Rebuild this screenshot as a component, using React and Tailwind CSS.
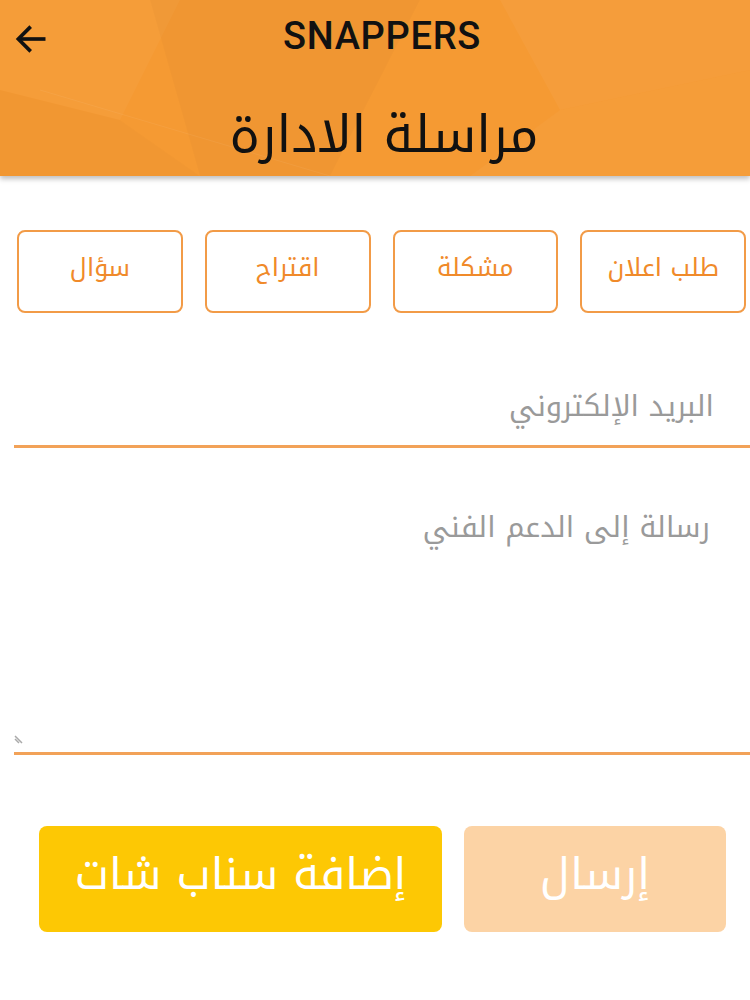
import React from "react";

const ar = { fontFamily: '"Noto Kufi Arabic", "Noto Sans Arabic", "DejaVu Sans", sans-serif' };

function Facets() {
  return (
    <svg className="absolute inset-0 w-full h-full" viewBox="0 0 750 176" preserveAspectRatio="none">
      <polygon points="0,0 180,0 120,120 0,90" fill="#ffffff" opacity="0.03" />
      <polygon points="150,0 420,0 330,176 200,176" fill="#000000" opacity="0.02" />
      <polygon points="500,0 750,0 750,70 560,110" fill="#ffffff" opacity="0.04" />
      <polygon points="560,110 750,70 750,176 470,176" fill="#ffffff" opacity="0.03" />
      <polygon points="0,90 120,120 200,176 0,176" fill="#000000" opacity="0.015" />
      <line x1="40" y1="90" x2="330" y2="176" stroke="#ffffff" strokeOpacity="0.06" strokeWidth="1" />
    </svg>
  );
}

export default function App() {
  const cats = ["طلب اعلان", "مشكلة", "اقتراح", "سؤال"];
  return (
    <div className="w-[750px] h-[1000px] bg-white overflow-hidden flex flex-col">
      <div className="relative h-[176px] bg-[#f59a33] shadow-[0_3px_5px_rgba(0,0,0,0.25)] z-10 shrink-0">
        <Facets />
        <div className="relative flex items-center h-[70px] pt-[2px]">
          <div className="w-[64px] pl-[12px] pt-[6px]">
            <svg width="38" height="38" viewBox="0 0 24 24" fill="none" stroke="#111" strokeWidth="2.3" strokeLinecap="square">
              <path d="M20 12H5" />
              <path d="M11 5l-7 7 7 7" />
            </svg>
          </div>
          <div className="flex-1 text-center pr-[50px] text-[38px] font-medium text-[#111] tracking-[0.7px]" style={{ fontFamily: 'Roboto, "Noto Sans", sans-serif' }}>
            SNAPPERS
          </div>
        </div>
        <div dir="rtl" className="relative text-center pt-[33px] pl-[18px] text-[51px] leading-[64px] text-[#111]" style={ar}>
          مراسلة الادارة
        </div>
      </div>

      <div dir="rtl" className="flex gap-[22px] pr-[4px] pl-[17px] mt-[54px] h-[83px]">
        {cats.map((c) => (
          <div key={c} className="flex-1 flex items-center justify-center border-2 border-[#f29b47] rounded-[8px] text-[25px] text-[#f08a2a] pb-[8px]" style={ar}>
            {c}
          </div>
        ))}
      </div>

      <div dir="rtl" className="ml-[14px] mt-[70px] h-[65px] border-b-[3px] border-[#f2a258] pr-[36px] pt-[2px] text-[29px] text-[#9a9a9a] leading-[44px]" style={ar}>
        البريد الإلكتروني
      </div>

      <div dir="rtl" className="relative ml-[14px] h-[307px] border-b-[3px] border-[#f2a258] pr-[40px] pt-[58px] text-[29px] text-[#9a9a9a] leading-[44px]" style={ar}>
        رسالة إلى الدعم الفني
        <svg className="absolute left-0 bottom-[8px]" width="10" height="10" viewBox="0 0 10 10">
          <path d="M1 2l7 7M1 5l4 4" stroke="#aaa" strokeWidth="1.5" />
        </svg>
      </div>

      <div dir="rtl" className="flex gap-[22px] pr-[24px] pl-[39px] mt-[71px] h-[106px]">
        <div className="w-[262px] flex items-center justify-center rounded-[8px] bg-[#fcd3a5] text-white text-[44px] pb-[8px]" style={ar}>
          إرسال
        </div>
        <div className="flex-1 flex items-center justify-center rounded-[8px] bg-[#fdc804] text-white text-[44px] pb-[8px]" style={ar}>
          إضافة سناب شات
        </div>
      </div>
    </div>
  );
}
